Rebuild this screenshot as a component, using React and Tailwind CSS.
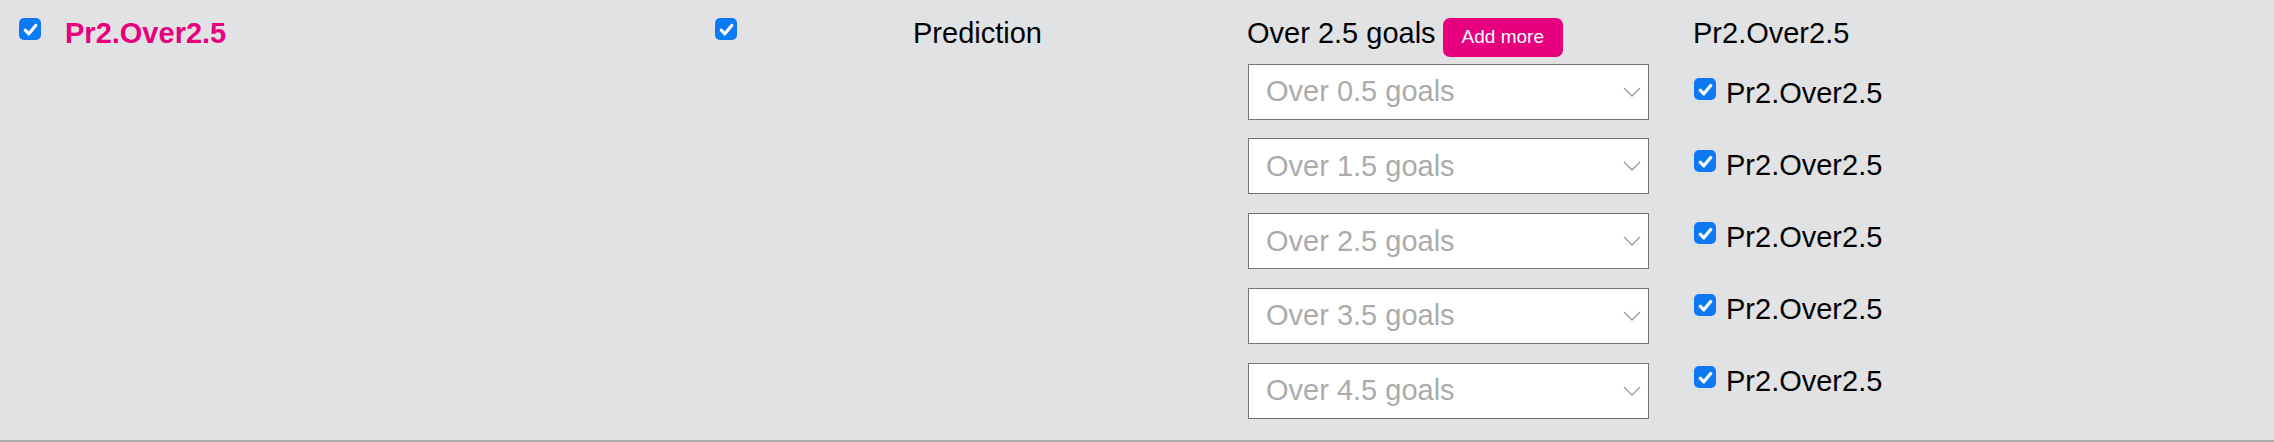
const options = ["Over 0.5 goals", "Over 1.5 goals", "Over 2.5 goals", "Over 3.5 goals", "Over 4.5 goals"];

const Check = () => (
  <span className="mt-[1px] flex h-[22px] w-[22px] shrink-0 items-center justify-center rounded-[5px] bg-[#0b7af4]">
    <svg viewBox="0 0 16 16" className="h-[19px] w-[19px]" fill="none">
      <path d="M3.6 8.6l3 3L12.4 4.6" stroke="#fff" strokeWidth="2.7" strokeLinecap="round" strokeLinejoin="round" />
    </svg>
  </span>
);

const Select = ({ label }) => (
  <div className="relative mb-[18.75px] h-[56px] w-[401px]">
    <select
      defaultValue=""
      className="h-full w-full appearance-none border border-[#747474] bg-white pl-[17px] text-[29px] leading-[33px] text-[#ababab] outline-none"
    >
      <option value="" disabled>
        {label}
      </option>
    </select>
    {/* chevron */}
    <svg viewBox="0 0 18 10" className="pointer-events-none absolute right-[8px] top-[23px] h-[10px] w-[18px]" fill="none">
      <path d="M1 1l8 8 8-8" stroke="#9c9c9c" strokeWidth="1.3" />
    </svg>
  </div>
);

const App = () => {
  return (
    <div className="h-[442px] w-full bg-[#e1e2e4] font-['Liberation_Sans',Arial,sans-serif] text-[29px] leading-[33px] text-black">
      <div className="flex h-full items-start border-b-2 border-[#abacae] pt-[17px]">
        {/* name */}
        <div className="flex w-[715px] items-start gap-[24px] pl-[19px]">
          <Check />
          <span className="font-bold text-[#e6007e]">Pr2.Over2.5</span>
        </div>

        {/* active */}
        <div className="w-[198px]">
          <Check />
        </div>

        {/* type */}
        <div className="w-[334px]">Prediction</div>

        {/* market */}
        <div className="flex w-[446px] flex-col">
          <div className="flex items-baseline">
            <span>Over 2.5 goals</span>
            <button
              type="button"
              className="ml-[7px] rounded-[7px] bg-[#e6007e] px-[19px] py-[8.5px] text-[19px] leading-[22px] text-white"
            >
              Add more
            </button>
          </div>
          <div className="mt-[7px] flex flex-col pl-[1px]">
            {options.map((o) => (
              <Select key={o} label={o} />
            ))}
          </div>
        </div>

        {/* outcomes */}
        <div className="flex flex-col">
          <span>Pr2.Over2.5</span>
          <div className="mt-[27px] flex flex-col">
            {options.map((o) => (
              <div key={o} className="flex h-[72px] items-start gap-[10px] pl-[1px]">
                <Check />
                <span>Pr2.Over2.5</span>
              </div>
            ))}
          </div>
        </div>
      </div>
    </div>
  );
};

export default App;
